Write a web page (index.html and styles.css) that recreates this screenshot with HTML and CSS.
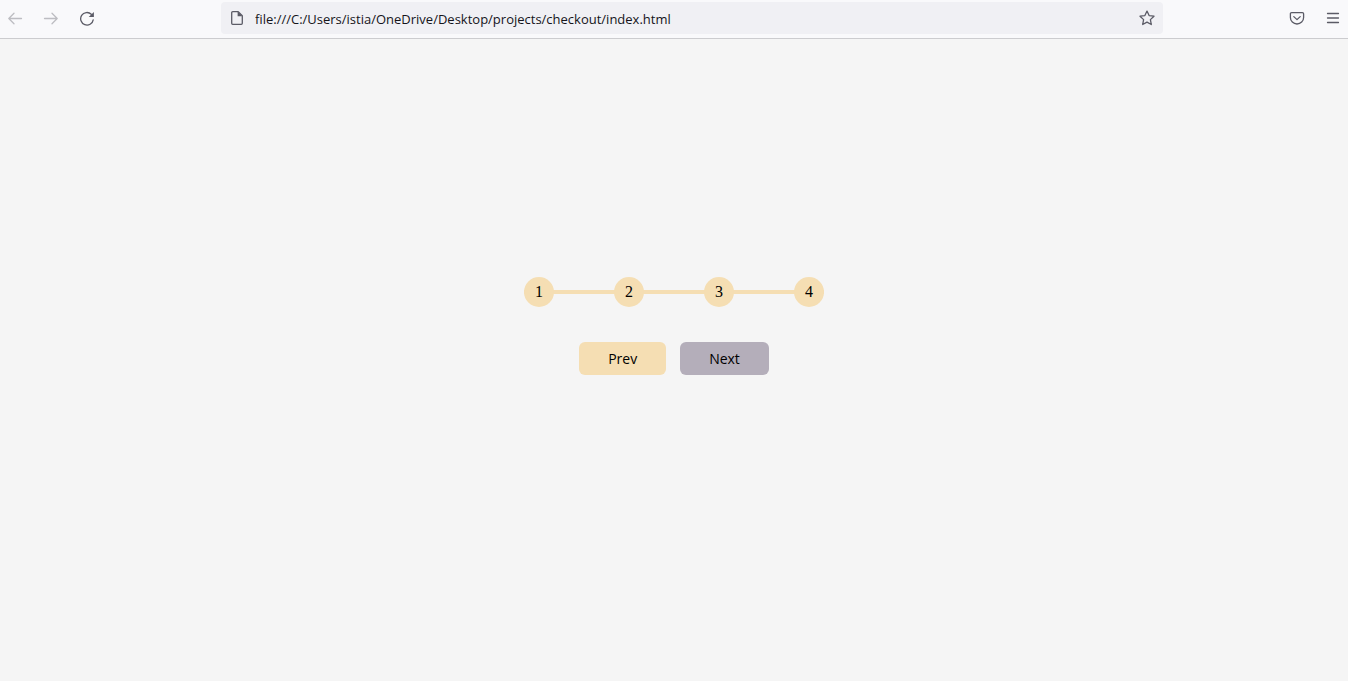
FILE: index.html
```html
<!DOCTYPE html>
<html lang="en">
<head>
<meta charset="utf-8">
<title>Checkout</title>
<link rel="stylesheet" href="styles.css">
</head>
<body>
<header class="toolbar">
  <nav class="nav" aria-label="Navigation">
    <button class="tool" type="button" aria-label="Back" disabled>
      <svg viewBox="0 0 16 16"><path d="M14.500 8.500H1.800M7 3.300 1.800 8.500l5.200 5.200"/></svg>
    </button>
    <button class="tool" type="button" aria-label="Forward" disabled>
      <svg viewBox="0 0 16 16"><path d="M1.500 8.500h12.700M9 3.300l5.200 5.200L9 13.700"/></svg>
    </button>
    <button class="tool" type="button" aria-label="Reload">
      <svg viewBox="0 0 16 16"><path d="M14.200 9.800A6.300 6.300 0 1 1 12.300 4.200"/><path class="solid" d="M14.900 1.900v5.200H9.700z"/></svg>
    </button>
  </nav>
  <form class="address">
    <svg class="icon" viewBox="0 0 16 16" aria-hidden="true"><path d="M3.700 1.700h5.500l4.100 4v7.600a1 1 0 0 1-1 1H3.700a1 1 0 0 1-1-1V2.700a1 1 0 0 1 1-1z"/><path class="solid" d="M8.600 1.500v4.800h4.800z"/></svg>
    <input class="url" type="text" aria-label="Address" spellcheck="false" value="file:///C:/Users/istia/OneDrive/Desktop/projects/checkout/index.html">
    <button class="tool" type="button" aria-label="Bookmark this page">
      <svg viewBox="0 0 16 16"><path d="M8 1.100 10.100 5.600l4.900.6-3.600 3.400.9 4.900L8 12.100l-4.300 2.400.9-4.900L1 6.200l4.900-.6z"/></svg>
    </button>
  </form>
  <div class="actions">
    <button class="tool" type="button" aria-label="Save to Pocket">
      <svg viewBox="0 0 16 16"><path d="M2.600 2.600h10.800a1.200 1.200 0 0 1 1.200 1.200v3.600a6.600 6.600 0 0 1-13.200 0V3.800a1.200 1.200 0 0 1 1.200-1.200z"/><path d="m4.800 6.600 3.200 3 3.200-3"/></svg>
    </button>
    <button class="tool" type="button" aria-label="Open menu">
      <svg viewBox="0 0 16 16"><path d="M2.500 3.500h11M2.500 8h11M2.500 12.500h11"/></svg>
    </button>
  </div>
</header>
<main class="page">
  <ol class="steps">
    <li class="step">1</li>
    <li class="step">2</li>
    <li class="step">3</li>
    <li class="step">4</li>
  </ol>
  <div class="buttons">
    <button class="btn prev" type="button">Prev</button>
    <button class="btn next" type="button">Next</button>
  </div>
</main>
</body>
</html>
```
FILE: styles.css
```css
* {
  box-sizing: border-box;
}

body {
  display: flex;
  flex-direction: column;
  min-height: 100vh;
  margin: 0;
  background: #f5f5f5;
}

.toolbar {
  display: grid;
  grid-template-columns: 221px 1fr 185px;
  align-items: center;
  padding: 2px 0 4px;
  border-bottom: 1px solid #cccccf;
  background: #f9f9fb;
}

.nav,
.actions {
  display: flex;
  gap: 20px;
}

.nav {
  padding-left: 7px;
}

.actions {
  justify-content: flex-end;
  padding-right: 7px;
}

.tool {
  display: flex;
  padding: 0;
  border: 0;
  background: none;
  color: #5b5b66;
}

.tool:disabled {
  color: #bdbdc2;
}

svg {
  width: 16px;
  height: 16px;
  fill: none;
  stroke: currentColor;
  stroke-width: 1.3;
  stroke-linecap: round;
  stroke-linejoin: round;
}

.solid {
  fill: currentColor;
  stroke: none;
}

.address {
  display: flex;
  align-items: center;
  gap: 10px;
  height: 32px;
  padding: 0 8px;
  border-radius: 4px;
  background: #f0f0f4;
  color: #5b5b66;
}

.url {
  flex: 1;
  min-width: 0;
  padding: 2px 0 0;
  border: 0;
  background: none;
  color: #15141a;
  font: 13px "Open Sans", sans-serif;
}

.page {
  display: flex;
  flex: 1;
  flex-direction: column;
  align-items: center;
  justify-content: center;
  gap: 35px;
  padding-bottom: 68px;
}

.steps {
  display: flex;
  justify-content: space-between;
  width: 300px;
  margin: 0;
  padding: 0;
  background: linear-gradient(#f5deb3, #f5deb3) center / 100% 4px no-repeat;
  list-style: none;
}

.step {
  display: grid;
  place-items: center;
  width: 30px;
  height: 30px;
  border-radius: 50%;
  background: #f5deb3;
  color: #000;
  font: 16px "Liberation Serif", serif;
}

.buttons {
  display: flex;
  gap: 14px;
}

.btn {
  padding: 8px 29px;
  border: 0;
  border-radius: 6px;
  color: #000;
  font: 14px/17px "Open Sans", sans-serif;
}

.prev {
  background: #f5deb3;
}

.next {
  background: #b4aeba;
}
```
